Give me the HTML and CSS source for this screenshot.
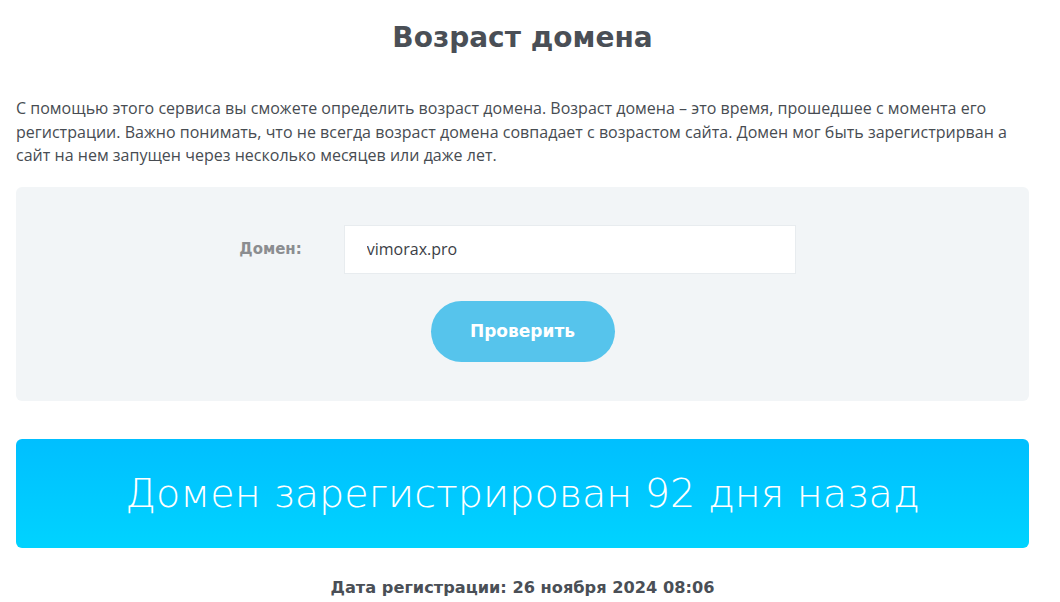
FILE: index.html
```html
<!DOCTYPE html>
<html lang="ru">
<head>
<meta charset="utf-8">
<title>Возраст домена</title>
<link rel="stylesheet" href="styles.css">
</head>
<body>
<div class="page">
  <h1 class="title">Возраст домена</h1>
  <p class="intro">С помощью этого сервиса вы сможете определить возраст домена. Возраст домена – это время, прошедшее с момента его регистрации. Важно понимать, что не всегда возраст домена совпадает с возрастом сайта. Домен мог быть зарегистрирван а сайт на нем запущен через несколько месяцев или даже лет.</p>
  <form class="panel">
    <div class="row">
      <label class="label" for="domain">Домен:</label>
      <input class="input" id="domain" type="text" value="vimorax.pro">
    </div>
    <button class="btn" type="button">Проверить</button>
  </form>
  <div class="banner">Домен зарегистрирован 92 дня назад</div>
  <div class="date">Дата регистрации: 26 ноября 2024 08:06</div>
</div>
</body>
</html>
```

FILE: styles.css
```css
html, body {
  margin: 0;
  padding: 0;
  background: #ffffff;
}
body {
  font-family: "Open Sans", "Noto Sans", sans-serif;
  color: #474c52;
}
.page {
  width: 1013px;
  margin-left: 16px;
  display: flex;
  flex-direction: column;
}
.title {
  margin: 18px 0 0;
  text-align: center;
  font-family: "DejaVu Sans", sans-serif;
  font-weight: 700;
  font-size: 28px;
  line-height: 40px;
  color: #4a4f56;
}
.intro {
  margin: 39px 0 0;
  font-size: 16px;
  letter-spacing: 0.02px;
  line-height: 23.5px;
  color: #474c52;
}
.panel {
  margin-top: 19px;
  background: #f2f5f7;
  border-radius: 6px;
  padding: 38px 0 39px;
  display: flex;
  flex-direction: column;
  align-items: center;
  gap: 27px;
}
.row {
  display: flex;
  align-items: center;
  gap: 42px;
  margin-right: 10px;
}
.label {
  font-family: "DejaVu Sans", sans-serif;
  font-weight: 700;
  font-size: 15px;
  color: #8b8d90;
}
.input {
  box-sizing: border-box;
  width: 452px;
  height: 49px;
  border: 1px solid #e8ecef;
  background: #ffffff;
  padding: 0 22px;
  font-family: "Open Sans", sans-serif;
  font-size: 16px;
  color: #3c4046;
  outline: none;
}
.btn {
  width: 184px;
  height: 61px;
  border: none;
  border-radius: 31px;
  background: #56c4ec;
  color: #ffffff;
  font-family: "DejaVu Sans", sans-serif;
  font-weight: 700;
  font-size: 17px;
  cursor: pointer;
}
.banner {
  margin-top: 38px;
  height: 109px;
  border-radius: 6px;
  background: linear-gradient(180deg, #00bfff 0%, #00d3ff 100%);
  display: flex;
  align-items: center;
  justify-content: center;
  font-family: "DejaVu Sans", sans-serif;
  font-weight: 300;
  font-size: 39.7px;
  color: #ffffff;
}
.date {
  margin-top: 30px;
  text-align: center;
  font-family: "DejaVu Sans", sans-serif;
  font-weight: 700;
  font-size: 16.2px;
  color: #4a4f56;
}
```
